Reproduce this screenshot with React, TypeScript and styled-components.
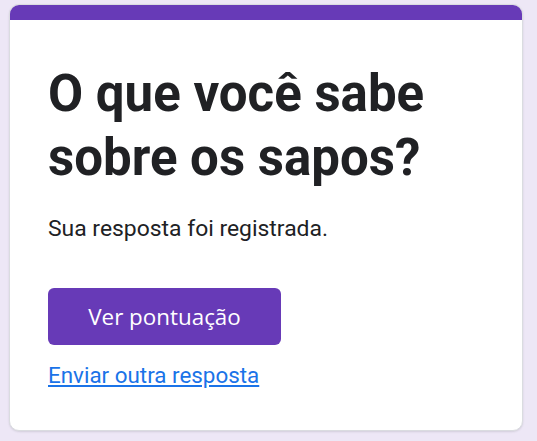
import React from "react";
import styled, { createGlobalStyle } from "styled-components";

const Global = createGlobalStyle`
  html, body { margin: 0; padding: 0; background: #ede7f6; }
  body { font-family: Roboto, "Noto Sans", Arial, sans-serif; }
`;

const Page = styled.div`
  padding: 4px 14px 10px 9px;
  min-height: 441px;
  box-sizing: border-box;
`;

const Card = styled.div`
  width: 514px;
  background: #fff;
  border: 1px solid #dadce0;
  border-radius: 10px;
  box-sizing: border-box;
  overflow: hidden;
  box-shadow: 0 1px 2px rgba(60, 64, 67, 0.15);
`;

const TopBar = styled.div`
  height: 16px;
  background: #673ab7;
  margin: -1px -1px 0;
`;

const Content = styled.div`
  display: flex;
  flex-direction: column;
  align-items: flex-start;
  padding: 42px 24px 39px 38px;
`;

const Title = styled.h1`
  margin: 0;
  font-family: Roboto, Arial, sans-serif;
  font-weight: 700;
  font-size: 51px;
  line-height: 64px;
  color: #202124;
`;

const Message = styled.p`
  margin: 23px 0 0;
  font-size: 22.9px;
  line-height: 32px;
  color: #202124;
`;

const Button = styled.button`
  margin-top: 43px;
  width: 233px;
  height: 57px;
  border: none;
  border-radius: 6px;
  background: #673ab7;
  color: #fff;
  font-family: "Open Sans", Roboto, sans-serif;
  font-weight: 500;
  font-size: 22.4px;
  display: flex;
  align-items: center;
  justify-content: center;
  cursor: pointer;
`;

const Link = styled.a`
  margin-top: 14px;
  font-size: 22.4px;
  line-height: 32px;
  color: #1a73e8;
  text-decoration: underline;
`;

export default function App() {
  return (
    <>
      <Global />
      <Page>
        <Card>
          <TopBar />
          <Content>
            <Title>
              O que você sabe
              <br />
              sobre os sapos?
            </Title>
            <Message>Sua resposta foi registrada.</Message>
            <Button>Ver pontuação</Button>
            <Link href="#">Enviar outra resposta</Link>
          </Content>
        </Card>
      </Page>
    </>
  );
}
